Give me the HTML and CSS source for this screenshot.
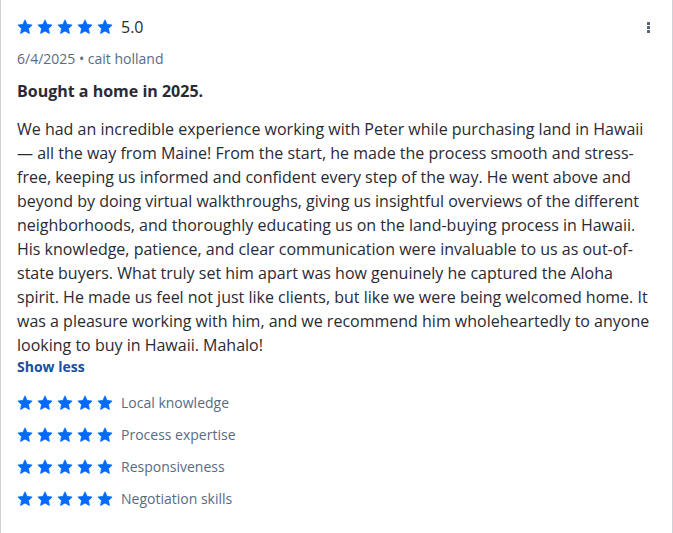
FILE: index.html
```html
<!DOCTYPE html>
<html>
<head>
<meta charset="utf-8">
<link rel="stylesheet" href="styles.css">
</head>
<body>
<svg width="0" height="0" class="defs">
  <defs>
    <symbol id="star" viewBox="0 0 16 16">
      <path d="M8 0.9l2.15 4.55 4.95.62-3.65 3.42.93 4.92L8 12l-4.38 2.41.93-4.92L.9 6.07l4.95-.62z" stroke="currentColor" stroke-width="0.8" stroke-linejoin="round"/>
    </symbol>
  </defs>
</svg>
<div class="card">
  <button class="kebab" aria-label="More"><span></span><span></span><span></span></button>
  <div class="top-row">
    <div class="stars">
      <svg class="star"><use href="#star"/></svg><svg class="star"><use href="#star"/></svg><svg class="star"><use href="#star"/></svg><svg class="star"><use href="#star"/></svg><svg class="star"><use href="#star"/></svg>
    </div>
    <span class="score">5.0</span>
  </div>
  <div class="meta">6/4/2025 • cait holland</div>
  <div class="title">Bought a home in 2025.</div>
  <p class="body">We had an incredible experience working with Peter while purchasing land in Hawaii — all the way from Maine! From the start, he made the process smooth and stress-free, keeping us informed and confident every step of the way. He went above and beyond by doing virtual walkthroughs, giving us insightful overviews of the different neighborhoods, and thoroughly educating us on the land-buying process in Hawaii. His knowledge, patience, and clear communication were invaluable to us as out-of-state buyers. What truly set him apart was how genuinely he captured the Aloha spirit. He made us feel not just like clients, but like we were being welcomed home. It was a pleasure working with him, and we recommend him wholeheartedly to anyone looking to buy in Hawaii. Mahalo!</p>
  <a class="toggle" href="#">Show less</a>
  <ul class="ratings">
    <li class="rating">
      <div class="stars"><svg class="star"><use href="#star"/></svg><svg class="star"><use href="#star"/></svg><svg class="star"><use href="#star"/></svg><svg class="star"><use href="#star"/></svg><svg class="star"><use href="#star"/></svg></div>
      <span class="label">Local knowledge</span>
    </li>
    <li class="rating">
      <div class="stars"><svg class="star"><use href="#star"/></svg><svg class="star"><use href="#star"/></svg><svg class="star"><use href="#star"/></svg><svg class="star"><use href="#star"/></svg><svg class="star"><use href="#star"/></svg></div>
      <span class="label">Process expertise</span>
    </li>
    <li class="rating">
      <div class="stars"><svg class="star"><use href="#star"/></svg><svg class="star"><use href="#star"/></svg><svg class="star"><use href="#star"/></svg><svg class="star"><use href="#star"/></svg><svg class="star"><use href="#star"/></svg></div>
      <span class="label">Responsiveness</span>
    </li>
    <li class="rating">
      <div class="stars"><svg class="star"><use href="#star"/></svg><svg class="star"><use href="#star"/></svg><svg class="star"><use href="#star"/></svg><svg class="star"><use href="#star"/></svg><svg class="star"><use href="#star"/></svg></div>
      <span class="label">Negotiation skills</span>
    </li>
  </ul>
</div>
</body>
</html>
```
FILE: styles.css
```css
* { box-sizing: border-box; }
html, body { margin: 0; padding: 0; background: #fff; }
body {
  font-family: "Open Sans", "Noto Sans", sans-serif;
  color: #2a2a33;
}
.defs { position: absolute; width: 0; height: 0; overflow: hidden; }
.card {
  position: relative;
  width: 673px;
  min-height: 533px;
  border-left: 1px solid #d1d1d5;
  border-right: 1px solid #d1d1d5;
  padding: 17px 16px 0 16px;
}
.kebab {
  position: absolute;
  top: 17px;
  right: 14px;
  width: 20px;
  height: 20px;
  padding: 0;
  border: 0;
  background: none;
  display: flex;
  flex-direction: column;
  align-items: center;
  justify-content: center;
  gap: 1px;
}
.kebab span {
  width: 3px;
  height: 3px;
  background: #54627a;
  border-radius: 0.5px;
}
.top-row {
  display: flex;
  align-items: center;
  height: 20px;
  gap: 8px;
}
.stars {
  display: flex;
  gap: 4px;
  color: #006aff;
  fill: #006aff;
}
.star {
  width: 16px;
  height: 16px;
  display: block;
}
.score {
  font-size: 16px;
  line-height: 20px;
  color: #2a2a33;
}
.meta {
  margin-top: 12px;
  font-size: 14px;
  line-height: 20px;
  color: #596b82;
}
.title {
  margin-top: 10px;
  font-size: 16px;
  line-height: 24px;
  font-weight: 700;
  color: #2a2a33;
}
.body {
  margin: 14px 0 0 0;
  font-size: 16px;
  line-height: 24px;
  color: #2a2a33;
}
.toggle {
  display: block;
  font-size: 14px;
  line-height: 20px;
  font-weight: 700;
  color: #1a4fa0;
  text-decoration: none;
}
.ratings {
  list-style: none;
  margin: 14px 0 0 0;
  padding: 0;
  display: flex;
  flex-direction: column;
  gap: 8px;
}
.rating {
  display: flex;
  align-items: center;
  height: 24px;
  gap: 8px;
}
.label {
  font-size: 14px;
  line-height: 20px;
  color: #596b82;
}
```
